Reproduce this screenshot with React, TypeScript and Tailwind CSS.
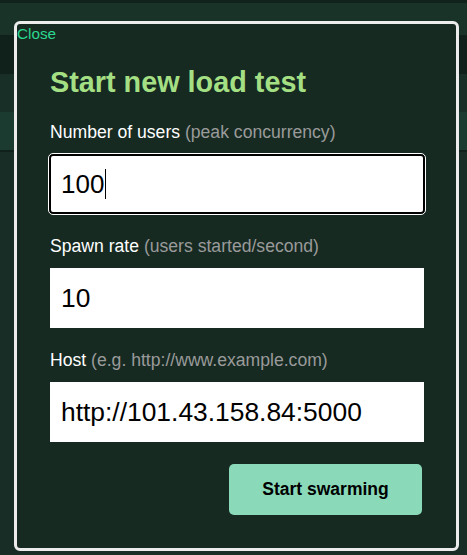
import React from 'react';

type Field = {
	name: string;
	label: string;
	hint: string;
	value: string;
	focused?: boolean;
};

const fields: Field[] = [
	{ name: 'user_count', label: 'Number of users', hint: '(peak concurrency)', value: '100', focused: true },
	{ name: 'spawn_rate', label: 'Spawn rate', hint: '(users started/second)', value: '10' },
	{ name: 'host', label: 'Host', hint: '(e.g. http://www.example.com)', value: 'http://101.43.158.84:5000' },
];

const App = () => {
	return (
		<div className="relative w-[467px] h-[555px] overflow-hidden bg-[#172d25] font-['Liberation_Sans',Arial,sans-serif]">
			{/* page chrome behind the dialog */}
			<div className="h-[3px] bg-[#11221c]" />
			<div className="h-[32px] bg-[#1a3329]" />
			<div className="h-[39px] bg-[#10201a]" />
			<div className="h-[38px] bg-[#182f27]" />
			<div className="h-[38px] bg-[#1c3b30]" />
			<div className="h-[2px] bg-[#10201a]" />

			<div className="absolute left-[14px] top-[21px] w-[445px] h-[530px] border-[3px] border-[#ececec] rounded-[6px] bg-[#162a22]">
				<a href="#" className="block pt-[1px] text-[15.3px] leading-[17px] text-[#2bd78f] no-underline">
					Close
				</a>

				<form className="flex flex-col pl-[33px] pr-[32px] pt-[23px]" onSubmit={(e) => e.preventDefault()}>
					<h2 className="text-[28.8px] leading-[34px] font-bold text-[#a4df84]">Start new load test</h2>

					<div className="flex flex-col gap-[22px] mt-[23px]">
						{fields.map((field) => (
							<label key={field.name} className="flex flex-col gap-[12px]">
								<span className="text-[17.6px] leading-[20px] text-white">
									{field.label} <span className="text-[#9a9a9a]">{field.hint}</span>
								</span>
								{field.focused ? (
									<div className="relative -ml-[1px]">
										<input
											name={field.name}
											defaultValue={field.value}
											className="h-[60px] w-[376px] rounded-[4px] border-2 border-black outline outline-1 outline-white bg-white pl-[10px] text-[26px] text-black"
										/>
										{/* text cursor */}
										<span className="absolute left-[56px] top-[15px] h-[30px] w-px bg-black" />
									</div>
								) : (
									<input
										name={field.name}
										defaultValue={field.value}
										className="h-[60px] w-[374px] bg-white pl-[11px] text-[26.4px] text-black outline-none"
									/>
								)}
							</label>
						))}
					</div>

					<div className="flex justify-end mt-[22px] pr-[2px]">
						<button
							type="submit"
							className="w-[193px] h-[51px] rounded-[5px] bg-[#8adab9] text-[17.5px] font-bold text-black"
						>
							Start swarming
						</button>
					</div>
				</form>
			</div>
		</div>
	);
};

export default App;
